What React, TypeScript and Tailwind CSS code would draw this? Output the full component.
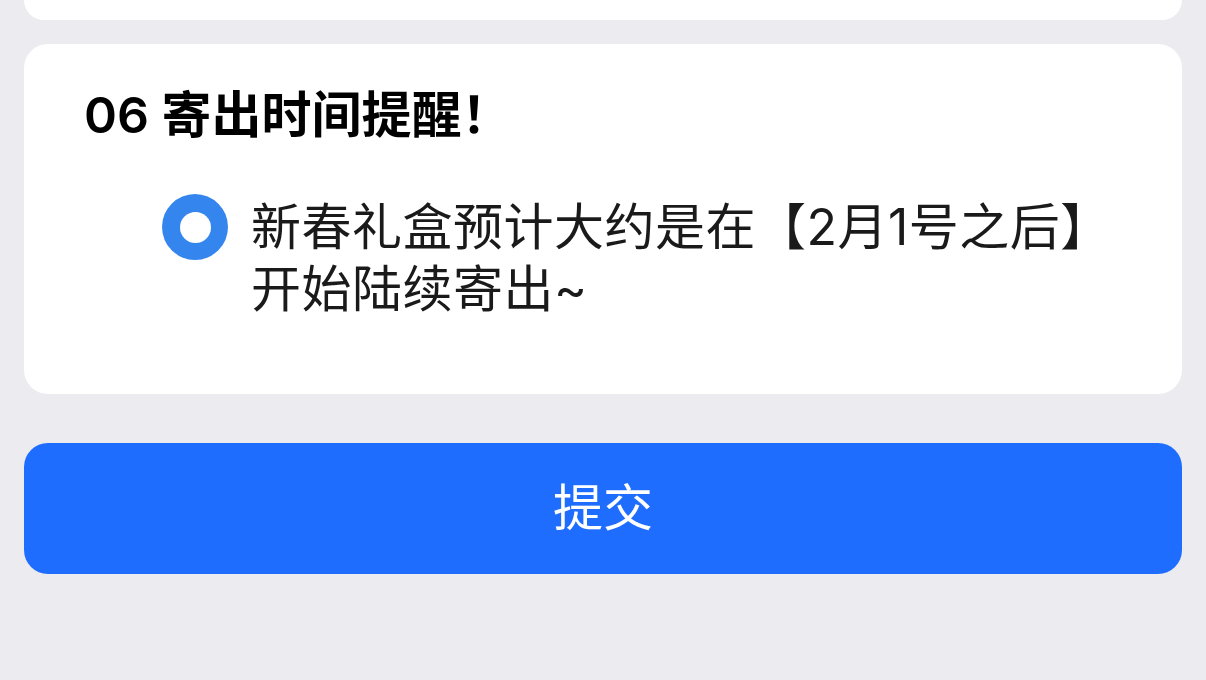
export default function App() {
  return (
    <div
      className="flex h-[680px] w-full flex-col overflow-hidden bg-[#ebebf0] px-6"
      style={{ fontFamily: 'Inter, "Noto Sans CJK SC", sans-serif' }}
    >
      {/* previous card, cut off at the top */}
      <div className="h-5 shrink-0 rounded-b-3xl bg-white" />

      <div className="mt-6 flex h-[350px] shrink-0 flex-col rounded-3xl bg-white pl-[60px] pr-10 pt-[42px]">
        <h2 className="text-[50px] font-semibold leading-[58px] text-black">
          06 寄出时间提醒！
        </h2>

        <div className="mt-[52px] flex items-start pl-[78px]">
          <div className="mt-[-2px] flex h-[66px] w-[66px] shrink-0 items-center justify-center rounded-full bg-[#3585ee]">
            <div className="h-[31px] w-[31px] rounded-full bg-white" />
          </div>
          <p className="ml-[23px] text-[50px] leading-[62px] tracking-[0.5px] text-[#1a1a1a]">
            新春礼盒预计大约是在【2月1号之后】
            <br />
            开始陆续寄出~
          </p>
        </div>
      </div>

      <button className="mt-[49px] flex h-[131px] shrink-0 items-center justify-center rounded-3xl bg-[#1f6dff] text-[50px] text-white">
        提交
      </button>
    </div>
  )
}
